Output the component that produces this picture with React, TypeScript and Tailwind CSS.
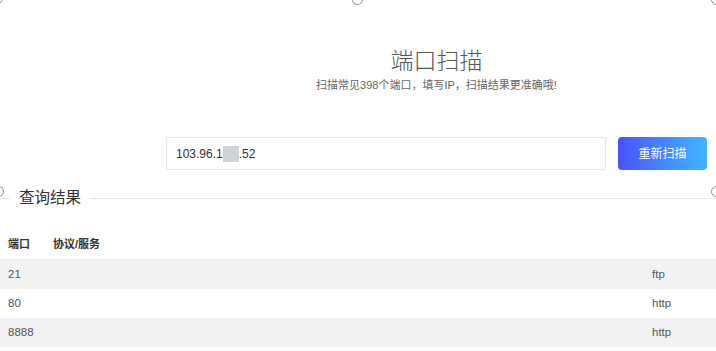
const rows = [
  { port: "21", service: "ftp" },
  { port: "80", service: "http" },
  { port: "8888", service: "http" },
];

const font = "font-['Liberation_Sans','Noto_Sans_CJK_SC',sans-serif]";

function Handle({ className }: { className: string }) {
  return (
    <span
      className={`absolute w-[11px] h-[11px] rounded-full border border-[#8a8a8a] bg-white ${className}`}
    />
  );
}

export default function App() {
  return (
    <div className={`relative w-[716px] h-[351px] overflow-hidden bg-white ${font}`}>
      {/* selection handles */}
      <Handle className="-left-[8px] -top-[7px]" />
      <Handle className="left-[352px] -top-[6px]" />
      <Handle className="left-[711px] -top-[6px]" />
      <Handle className="-left-[7px] top-[186px]" />
      <Handle className="left-[711px] top-[186px]" />

      {/* Header + search */}
      <div className="ml-[166px] w-[541px] flex flex-col">
        <div className="flex flex-col items-center pt-[47px]">
          <h1 className="text-[23px] leading-[28px] font-light text-[#555]">端口扫描</h1>
          <p className="mt-[3px] text-[11px] leading-[14px] text-[#666]">
            扫描常见398个端口，填写IP，扫描结果更准确哦!
          </p>
        </div>
        <div className="flex gap-[12px] mt-[45px] h-[33px]">
          <div className="flex-1 flex items-center px-[9px] border border-[#e6e6e6] rounded-[2px] text-[12px] text-[#333]">
            103.96.1
            <span className="inline-block w-[16px] h-[16px] bg-[#cfd2d6]" />
            .52
          </div>
          <button className="w-[89px] rounded-[4px] bg-gradient-to-r from-[#4a4ffc] to-[#40b4ff] text-white text-[12px]">
            重新扫描
          </button>
        </div>
      </div>

      {/* 查询结果 divider */}
      <div className="flex items-center mt-[17px] h-[22px]">
        <div className="w-[10px] h-px bg-[#e6e6e6]" />
        <span className="px-[9px] text-[15.5px] text-[#333]">查询结果</span>
        <div className="flex-1 h-px bg-[#e6e6e6]" />
      </div>

      {/* table */}
      <div className="mt-[21px]">
        <div className="flex items-center h-[30px] border-b border-[#ececec] text-[11px] font-bold text-[#333]">
          <span className="w-[53px] pl-[8px]">端口</span>
          <span>协议/服务</span>
        </div>
        {rows.map((r, i) => (
          <div
            key={r.port}
            className={`flex items-center h-[29px] text-[11.5px] text-[#555] ${
              i % 2 === 0 ? "bg-[#f2f2f2]" : "bg-white"
            }`}
          >
            <span className="w-[652px] pl-[8px]">{r.port}</span>
            <span>{r.service}</span>
          </div>
        ))}
      </div>
    </div>
  );
}
